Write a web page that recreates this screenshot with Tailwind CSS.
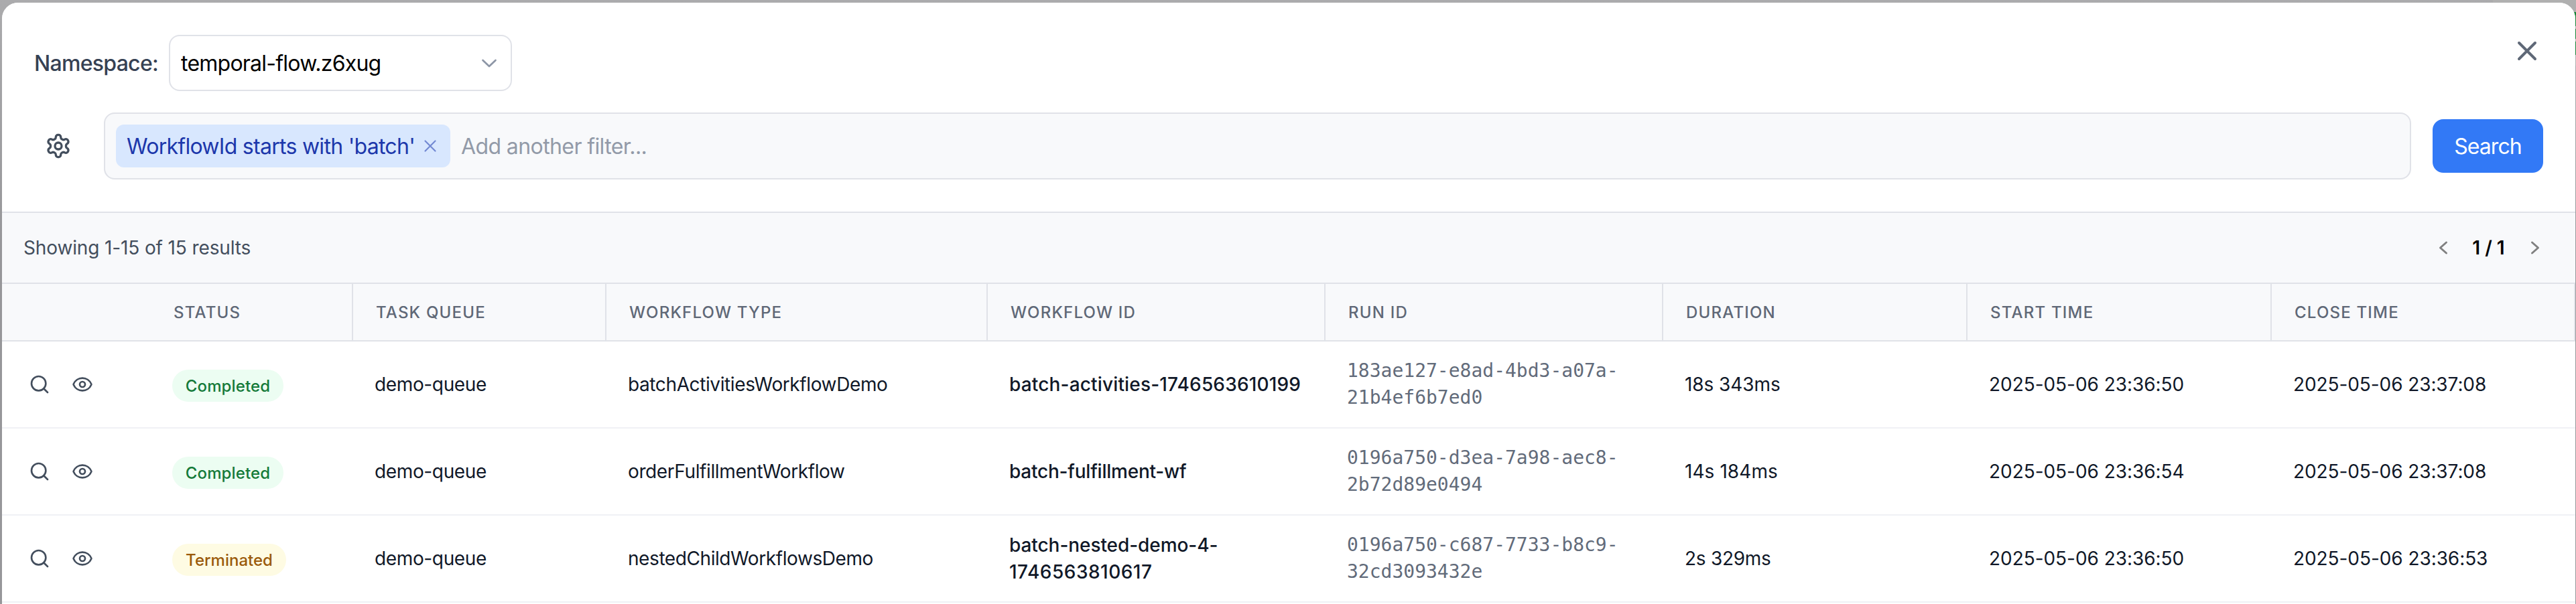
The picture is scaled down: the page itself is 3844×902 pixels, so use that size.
<!DOCTYPE html>
<html lang="en">
<head>
<meta charset="utf-8">
<title>Workflows</title>
<script src="https://cdn.jsdelivr.net/npm/@tailwindcss/browser@4"></script>
</head>
<body class="h-[902px] w-[3844px] overflow-hidden font-['Inter',sans-serif] text-[#101828]">
<svg class="hidden">
  <symbol id="search" viewBox="0 0 24 24"><circle cx="11" cy="11" r="8"/><path d="m21 21-4.35-4.35"/></symbol>
  <symbol id="eye" viewBox="0 0 24 24"><path d="M2.062 12.348a1 1 0 0 1 0-.696 10.75 10.75 0 0 1 19.876 0 1 1 0 0 1 0 .696 10.75 10.75 0 0 1-19.876 0"/><circle cx="12" cy="12" r="3"/></symbol>
</svg>
<div class="relative h-[902px] w-[3844px] overflow-hidden bg-linear-to-b from-[#ababad] to-[#97979a] to-40% pl-[3px] pt-1">
  <!-- Dimmed page edge behind the dialog -->
  <div class="absolute right-0 top-0 h-[98px] w-[124px] bg-[#b0b0b0]"></div>
  <div class="absolute right-0 top-[18px] flex h-16 w-[3px] flex-col gap-1">
    <div class="h-[21px] bg-[#178236]"></div><div class="h-4 bg-[#178236]"></div><div class="h-5 bg-[#178236]"></div>
  </div>
  <main class="relative h-[898px] w-[3840px] overflow-hidden rounded-t-3xl bg-white">
    <button class="absolute right-12 top-12" aria-label="Close">
      <svg class="size-12" viewBox="0 0 24 24" fill="none" stroke="#5f6877" stroke-width="2" stroke-linecap="round" stroke-linejoin="round"><path d="M18 6 6 18M6 6l12 12"/></svg>
    </button>
    <header class="flex h-[314px] flex-col gap-8 border-b-2 border-[#e0e2e8] bg-white px-12 pt-12">
      <div class="flex h-[84px] items-center">
        <label class="w-[201px] whitespace-nowrap pt-px text-[32px] font-medium tracking-[-0.71px] text-[#364153]">Namespace:</label>
        <div class="flex h-[84px] w-[512px] items-center justify-between rounded-2xl border-2 border-[#e0e2e8] px-4 text-[32px] text-black">
          <span class="pt-px tracking-[-0.76px]">temporal-flow.z6xug</span>
          <svg class="size-8" viewBox="0 0 32 32" fill="none" stroke="#8d96a6" stroke-width="2.7" stroke-linecap="round" stroke-linejoin="round"><path d="m6.5 12 9.5 9 9.5-9"/></svg>
        </div>
      </div>
      <div class="flex h-[100px] items-center">
        <div class="flex w-[104px] items-center pl-4">
          <svg class="size-10" viewBox="0 0 24 24" fill="none" stroke="#434e5d" stroke-width="2" stroke-linecap="round" stroke-linejoin="round"><path d="M12.22 2h-.44a2 2 0 0 0-2 2v.18a2 2 0 0 1-1 1.73l-.43.25a2 2 0 0 1-2 0l-.15-.08a2 2 0 0 0-2.73.73l-.22.38a2 2 0 0 0 .73 2.73l.15.1a2 2 0 0 1 1 1.72v.51a2 2 0 0 1-1 1.74l-.15.09a2 2 0 0 0-.73 2.73l.22.38a2 2 0 0 0 2.73.73l.15-.08a2 2 0 0 1 2 0l.43.25a2 2 0 0 1 1 1.73V20a2 2 0 0 0 2 2h.44a2 2 0 0 0 2-2v-.18a2 2 0 0 1 1-1.73l.43-.25a2 2 0 0 1 2 0l.15.08a2 2 0 0 0 2.73-.73l.22-.39a2 2 0 0 0-.73-2.73l-.15-.08a2 2 0 0 1-1-1.74v-.5a2 2 0 0 1 1-1.74l.15-.09a2 2 0 0 0 .73-2.73l-.22-.38a2 2 0 0 0-2.73-.73l-.15.08a2 2 0 0 1-2 0l-.43-.25a2 2 0 0 1-1-1.73V4a2 2 0 0 0-2-2z"/><circle cx="12" cy="12" r="3"/></svg>
        </div>
        <div class="flex h-[100px] w-[3443px] items-center gap-4 rounded-2xl border-2 border-[#e0e2e8] bg-[#f8f9fb] px-4 text-[32px]">
          <div class="flex h-16 w-[499px] items-center rounded-xl bg-[#d8e7fe] pl-4 text-[#1c37ab]">
            <span class="w-[441px] whitespace-nowrap pt-0.5 tracking-[-0.72px]">WorkflowId starts with 'batch'</span>
            <svg class="size-6" viewBox="0 0 24 24" fill="none" stroke="#7389d3" stroke-width="2.2" stroke-linecap="round"><path d="m4.5 4.5 15 15M19.5 4.5l-15 15"/></svg>
          </div>
          <span class="pt-0.5 tracking-[-0.6px] text-[#929aa8]">Add another filter...</span>
        </div>
        <button class="ml-8 h-20 w-[165px] rounded-2xl bg-[#3279f6] pt-0.5 text-[32px] tracking-[-0.95px] text-white">Search</button>
      </div>
    </header>
    <section class="flex h-[106px] items-center justify-between border-b-2 border-[#e0e2e8] bg-[#f8f9fb] pl-8 pr-[52px] text-[28px]">
      <span class="tracking-[-0.13px] text-[#434e5d]">Showing 1-15 of 15 results</span>
      <div class="flex items-center font-semibold text-black">
        <svg class="h-6 w-4" viewBox="0 0 16 24" fill="none" stroke="#808080" stroke-width="3" stroke-linecap="round" stroke-linejoin="round"><path d="m12.5 4-9 8 9 8"/></svg>
        <span class="w-[121px] pr-0.5 text-center">1 / 1</span>
        <svg class="h-6 w-4" viewBox="0 0 16 24" fill="none" stroke="#808080" stroke-width="3" stroke-linecap="round" stroke-linejoin="round"><path d="m3.5 4 9 8-9 8"/></svg>
      </div>
    </section>
    <table class="w-[3840px] table-fixed border-separate border-spacing-0 text-left text-[28px] leading-10">
      <colgroup>
        <col class="w-[222px]"><col class="w-[302px]"><col class="w-[378px]"><col class="w-[569px]"><col class="w-[504px]"><col class="w-[504px]"><col class="w-[454px]"><col class="w-[454px]"><col class="w-[453px]">
      </colgroup>
      <thead>
        <tr class="h-[86px] bg-[#f8f9fb] text-2xl text-[#5f6877] *:border-b-2 *:border-[#e0e2e8] *:p-0 *:pl-[34px] *:pt-0.5 *:font-medium *:tracking-[1.2px]">
          <th></th>
          <th class="border-r-2">STATUS</th>
          <th class="border-r-2">TASK QUEUE</th>
          <th class="border-r-2">WORKFLOW TYPE</th>
          <th class="border-r-2">WORKFLOW ID</th>
          <th class="border-r-2">RUN ID</th>
          <th class="border-r-2">DURATION</th>
          <th class="border-r-2">START TIME</th>
          <th class="border-r-2">CLOSE TIME</th>
        </tr>
      </thead>
      <tbody>
        <tr class="h-[130px] *:border-b-2 *:border-[#f0f1f5] *:p-0 *:pl-8">
          <td><div class="-ml-8 flex gap-8 pl-10 text-[#434e5d]"><svg class="size-8" fill="none" stroke="currentColor" stroke-width="2" stroke-linecap="round" stroke-linejoin="round"><use href="#search"/></svg><svg class="size-8" fill="none" stroke="currentColor" stroke-width="2" stroke-linecap="round" stroke-linejoin="round"><use href="#eye"/></svg></div></td>
          <td><div class="mt-1 flex h-12 w-[166px] items-center justify-center rounded-full bg-[#ecfdf2] pt-0.5 text-2xl font-medium tracking-[0.13px] text-[#147a39]">Completed</div></td>
          <td class="tracking-[-0.36px]">demo-queue</td>
          <td class="tracking-[-0.39px]">batchActivitiesWorkflowDemo</td>
          <td class="font-medium tracking-[0.16px]">batch-activities-1746563610199</td>
          <td class="font-['DejaVu_Sans_Mono',monospace] text-[28px] text-[#626b7a]">183ae127-e8ad-4bd3-a07a-<br>21b4ef6b7ed0</td>
          <td class="tracking-[-0.07px]">18s 343ms</td>
          <td class="tracking-[-0.05px]">2025-05-06 23:36:50</td>
          <td class="tracking-[-0.09px]">2025-05-06 23:37:08</td>
        </tr>
        <tr class="h-[130px] *:border-b-2 *:border-[#f0f1f5] *:p-0 *:pl-8">
          <td><div class="-ml-8 flex gap-8 pl-10 text-[#434e5d]"><svg class="size-8" fill="none" stroke="currentColor" stroke-width="2" stroke-linecap="round" stroke-linejoin="round"><use href="#search"/></svg><svg class="size-8" fill="none" stroke="currentColor" stroke-width="2" stroke-linecap="round" stroke-linejoin="round"><use href="#eye"/></svg></div></td>
          <td><div class="mt-1 flex h-12 w-[166px] items-center justify-center rounded-full bg-[#ecfdf2] pt-0.5 text-2xl font-medium tracking-[0.13px] text-[#147a39]">Completed</div></td>
          <td class="tracking-[-0.36px]">demo-queue</td>
          <td class="tracking-[-0.39px]">orderFulfillmentWorkflow</td>
          <td class="font-medium tracking-[-0.23px]">batch-fulfillment-wf</td>
          <td class="font-['DejaVu_Sans_Mono',monospace] text-[28px] text-[#626b7a]">0196a750-d3ea-7a98-aec8-<br>2b72d89e0494</td>
          <td class="tracking-[0.07px]">14s 184ms</td>
          <td class="tracking-[-0.05px]">2025-05-06 23:36:54</td>
          <td class="tracking-[-0.09px]">2025-05-06 23:37:08</td>
        </tr>
        <tr class="h-[130px] *:border-b-2 *:border-[#f0f1f5] *:p-0 *:pl-8">
          <td><div class="-ml-8 flex gap-8 pl-10 text-[#434e5d]"><svg class="size-8" fill="none" stroke="currentColor" stroke-width="2" stroke-linecap="round" stroke-linejoin="round"><use href="#search"/></svg><svg class="size-8" fill="none" stroke="currentColor" stroke-width="2" stroke-linecap="round" stroke-linejoin="round"><use href="#eye"/></svg></div></td>
          <td><div class="mt-1 flex h-12 w-[170px] items-center justify-center rounded-full bg-[#fefbe3] pt-0.5 text-2xl font-medium text-[#9a5a0b]">Terminated</div></td>
          <td class="tracking-[-0.36px]">demo-queue</td>
          <td class="tracking-[-0.42px]">nestedChildWorkflowsDemo</td>
          <td class="font-medium"><span class="tracking-[-0.07px]">batch-nested-demo-4-</span><br><span class="tracking-[0.49px]">1746563810617</span></td>
          <td class="font-['DejaVu_Sans_Mono',monospace] text-[28px] text-[#626b7a]">0196a750-c687-7733-b8c9-<br>32cd3093432e</td>
          <td class="tracking-[-0.28px]">2s 329ms</td>
          <td class="tracking-[-0.05px]">2025-05-06 23:36:50</td>
          <td class="tracking-[-0.07px]">2025-05-06 23:36:53</td>
        </tr>
      </tbody>
    </table>
  </main>
</div>
</body>
</html>
